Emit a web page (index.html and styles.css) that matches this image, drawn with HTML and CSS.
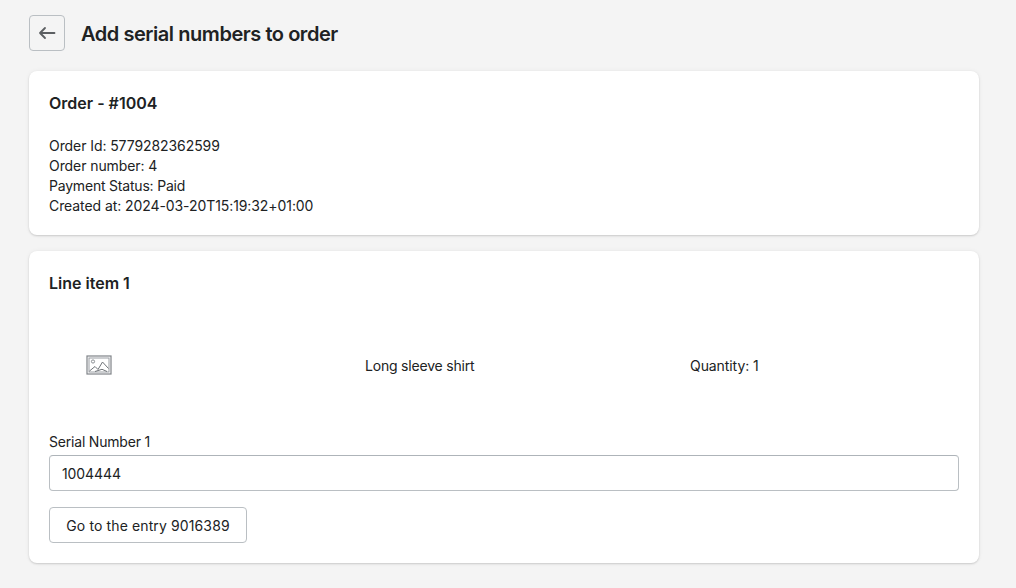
FILE: index.html
```html
<!DOCTYPE html>
<html lang="en">
<head>
<meta charset="utf-8">
<title>Add serial numbers to order</title>
<link rel="stylesheet" href="styles.css">
</head>
<body>
<main class="page">
  <header class="page-header">
    <button class="back" aria-label="Back">
      <svg width="20" height="20" viewBox="0 0 20 20" aria-hidden="true"><path d="M17.500 10H3M8 5l-5 5 5 5" fill="none" stroke="#5c5f62" stroke-width="1.8" stroke-linecap="round" stroke-linejoin="round"/></svg>
    </button>
    <h1 class="title">Add serial numbers to order</h1>
  </header>
  <section class="card order">
    <h2 class="card-title">Order - #1004</h2>
    <div class="details">
      <p>Order Id: 5779282362599</p>
      <p>Order number: 4</p>
      <p class="tight">Payment Status: Paid</p>
      <p>Created at: 2024-03-20T15:19:32+01:00</p>
    </div>
  </section>
  <section class="card">
    <h2 class="card-title">Line item 1</h2>
    <div class="line">
      <div class="thumb">
        <svg width="26" height="20" viewBox="0 0 26 20" aria-hidden="true">
          <rect x="1" y="1" width="24" height="18" fill="#fff" stroke="#7f8388" stroke-width="1.2"/>
          <rect x="3" y="3" width="20" height="14" fill="none" stroke="#9a9ea3" stroke-width="1"/>
          <circle cx="7" cy="6.500" r="1.600" fill="none" stroke="#7f8388" stroke-width=".9"/>
          <path d="M3.500 16l5.500-4.500 3 3 4.500-7.500 6 6.500" fill="none" stroke="#6f7378" stroke-width="1"/>
          <path d="M9 16.500l7-2.200 5 2.200" fill="none" stroke="#6f7378" stroke-width="1"/>
        </svg>
      </div>
      <div class="name tight">Long sleeve shirt</div>
      <div class="qty">Quantity: 1</div>
    </div>
    <label class="label tight" for="sn">Serial Number 1</label>
    <input class="input" id="sn" value="1004444">
    <button class="btn">Go to the entry 9016389</button>
  </section>
</main>
</body>
</html>
```
FILE: styles.css
```css
* { box-sizing: border-box; }
html, body { margin: 0; height: 100%; }
body {
  background: #f4f4f4;
  color: #202223;
  font-family: Inter, "Liberation Sans", sans-serif;
  font-size: 14px;
  line-height: 20px;
  letter-spacing: -0.08px;
}
.tight { letter-spacing: -0.2px; }
.page { padding: 15px 37px 0 29px; }
.page-header { display: flex; align-items: center; gap: 16px; height: 36px; margin-bottom: 20px; }
.back {
  width: 36px; height: 36px; padding: 0;
  display: flex; align-items: center; justify-content: center;
  background: transparent;
  border: 1px solid #babfc3; border-radius: 4px;
}
.title { margin: 0; padding-top: 2px; font-size: 20px; line-height: 28px; font-weight: 600; letter-spacing: -0.45px; }
.card {
  background: #fff;
  border-radius: 8px;
  box-shadow: 0 0 5px rgba(23,24,24,.05), 0 1px 2px rgba(0,0,0,.15);
  padding: 20px;
  margin-bottom: 16px;
}
.card-title { margin: 0; font-size: 16px; line-height: 24px; font-weight: 600; letter-spacing: 0; }
.details { margin-top: 21px; margin-bottom: -1px; }
.details p { margin: 0; }
.line {
  display: grid;
  grid-template-columns: 316px 325px 1fr;
  align-items: center;
  height: 100px;
  margin-top: 20px;
  margin-bottom: 17px;
}
.thumb { display: flex; justify-content: center; width: 100px; }
.name, .qty { padding-top: 2px; }
.label { display: block; margin-bottom: 3px; }
.input {
  display: block; width: 100%; height: 36px;
  padding: 0 12px;
  border: 1px solid #babfc3; border-top-color: #aeb4b9; border-radius: 4px;
  background: #fff; color: #202223;
  font: inherit;
  letter-spacing: -0.1px;
}
.btn {
  display: block; width: 198px; height: 36px; margin-top: 16px;
  padding: 1px 0 0;
  background: #fff; color: #202223;
  border: 1px solid #babfc3; border-radius: 4px;
  font: 400 14px/20px Inter, "Liberation Sans", sans-serif;
  letter-spacing: 0.12px;
}
```
